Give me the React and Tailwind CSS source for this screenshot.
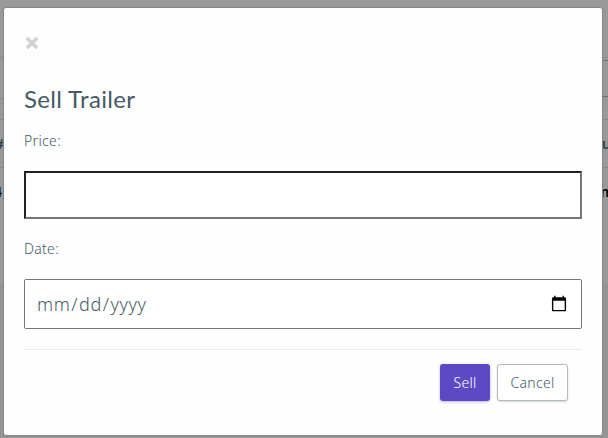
import React from "react";

function Listing() {
  return (
    <div className="h-[438px] w-[608px] bg-[#949494] font-['Noto_Sans',sans-serif] text-sm">
      <div className="h-[284px] bg-[#999999]">
        <div className="h-[58px] border-b border-[#8a8a8a]"></div>
        <div className="flex h-[62px] justify-between border-b border-[#878787] pt-0.5">
          <div className="h-[39px] w-5 border-b border-[#8a8a8a]"></div>
          <div className="h-[37px] w-5 border-y border-[#707070]"></div>
        </div>
        <div className="flex h-12 items-center justify-between overflow-hidden border-b border-[#878787] font-semibold text-[#2c3e48]">
          <span className="-ml-[5px]">#</span>
          <span className="-mr-[3px]">u</span>
        </div>
        <div className="flex h-12 items-center justify-between overflow-hidden font-semibold text-black">
          <span className="-ml-[6px]">4</span>
          <span className="-mr-1.5">m</span>
        </div>
      </div>
    </div>
  );
}

function SellModal() {
  return (
    <div className="absolute top-[7px] left-[3px] h-[429px] w-[600px] rounded-[3px] border border-[#858585] bg-[#fefefe] px-5 font-['Noto_Sans',sans-serif] text-sm font-light text-[#455a64]">
      <button className="mt-[27px] block h-4 w-4" aria-label="Close">
        <svg viewBox="0 0 16 16" className="h-4 w-4" fill="none">
          <path d="M2.8 3l10.4 10M13.2 3l-10.4 10" stroke="#d0d0d0" strokeWidth="3.2" />
        </svg>
      </button>
      <h2 className="mt-[32px] h-8 font-['Lato',sans-serif] text-2xl leading-8 font-normal tracking-[0.35px] text-[#455a64]">
        Sell Trailer
      </h2>
      <label className="mt-[16px] block h-5 leading-5 tracking-[0.35px]">
        Price:
      </label>
      <input
        type="text"
        className="mt-[20px] block h-12 w-[558px] border-2 border-t-[#202020] border-r-[#767676] border-b-[#767676] border-l-[#202020] bg-white px-3"
      />
      <label className="mt-[20px] block h-5 leading-5 tracking-[0.3px]">
        Date:
      </label>
      <input
        type="date"
        className="mt-[20px] block h-[50px] w-[558px] rounded-[2px] border border-[#767676] bg-white pr-[11px] pl-[11px] text-lg font-light tracking-[0.55px] text-[#455a64]"
      />
      <div className="mt-[20px] flex h-[52px] w-[558px] justify-end gap-[7px] border-t border-[#e9e9e9] pt-[14px] pr-[14px]">
        <button className="h-[37px] w-[50px] rounded-[3px] bg-[#5d49c6] tracking-[0.3px] text-white shadow-[0_1px_3px_rgba(93,73,198,0.4)]">
          Sell
        </button>
        <button className="h-[37px] w-[71px] rounded-[3px] border border-[#b0bbbf] bg-white tracking-[0.3px] shadow-[0_1px_2px_rgba(0,0,0,0.15)]">
          Cancel
        </button>
      </div>
    </div>
  );
}

function App() {
  return (
    <div className="relative h-[438px] w-[608px] overflow-hidden">
      <Listing />
      <SellModal />
    </div>
  );
}

export default App;
